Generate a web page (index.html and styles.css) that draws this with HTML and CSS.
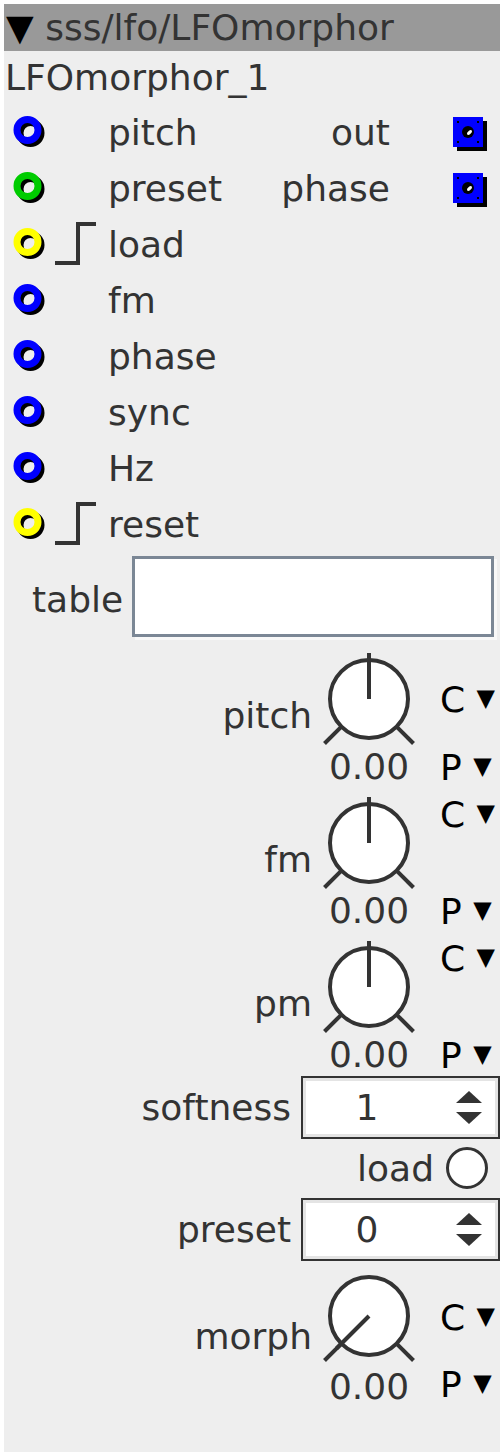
FILE: index.html
```html
<!DOCTYPE html>
<html>
    <head>
        <meta charset="utf-8">
        <title>LFOmorphor</title>
        <link rel="stylesheet" href="styles.css">
    </head>
    <body>
        <svg class="defs">
            <defs>
                <symbol id="jack" viewBox="0 0 36 36">
                    <circle cx="18.5" cy="19" r="10.5" fill="none" stroke="#000" stroke-width="7"/>
                    <circle cx="15.5" cy="16" r="10.5" fill="none" stroke="currentColor" stroke-width="7"/>
                </symbol>
                <symbol id="trig" viewBox="0 0 46 44">
                    <polyline points="3,41 26,41 26,2 44,2" fill="none" stroke="#333" stroke-width="4"/>
                </symbol>
                <symbol id="outlet" viewBox="0 0 38 38">
                    <rect x="6" y="8" width="30" height="30" fill="#000"/>
                    <rect x="2" y="4" width="30" height="30" fill="#00f"/>
                    <rect x="6" y="8" width="2" height="2" fill="#000"/>
                    <rect x="26" y="8" width="2" height="2" fill="#000"/>
                    <rect x="6" y="28" width="2" height="2" fill="#000"/>
                    <rect x="26" y="28" width="2" height="2" fill="#000"/>
                    <circle cx="17" cy="19" r="6" fill="#000"/>
                    <ellipse cx="18.5" cy="19.5" rx="3" ry="1.6" fill="#fff" transform="rotate(-40 18.5 19.5)"/>
                </symbol>
                <symbol id="knob" viewBox="0 0 100 100">
                    <circle cx="50" cy="50" r="39" fill="#fff" stroke="#333" stroke-width="4"/>
                    <line x1="21.7" y1="78.3" x2="5.5" y2="94.5" stroke="#333" stroke-width="4"/>
                    <line x1="78.3" y1="78.3" x2="94.5" y2="94.5" stroke="#333" stroke-width="4"/>
                </symbol>
            </defs>
        </svg>

        <div class="panel">
            <div class="header"><span class="tri">▼</span> sss/lfo/LFOmorphor</div>
            <div class="name">LFOmorphor_1</div>

            <div class="port">
                <svg class="jack blue"><use href="#jack"/></svg>
                <span class="trig"></span>
                <span class="plabel">pitch</span>
                <span class="olabel">out</span>
                <svg class="outlet"><use href="#outlet"/></svg>
            </div>
            <div class="port">
                <svg class="jack green"><use href="#jack"/></svg>
                <span class="trig"></span>
                <span class="plabel">preset</span>
                <span class="olabel">phase</span>
                <svg class="outlet"><use href="#outlet"/></svg>
            </div>
            <div class="port">
                <svg class="jack yellow"><use href="#jack"/></svg>
                <svg class="trig"><use href="#trig"/></svg>
                <span class="plabel">load</span>
            </div>
            <div class="port">
                <svg class="jack blue"><use href="#jack"/></svg>
                <span class="trig"></span>
                <span class="plabel">fm</span>
            </div>
            <div class="port">
                <svg class="jack blue"><use href="#jack"/></svg>
                <span class="trig"></span>
                <span class="plabel">phase</span>
            </div>
            <div class="port">
                <svg class="jack blue"><use href="#jack"/></svg>
                <span class="trig"></span>
                <span class="plabel">sync</span>
            </div>
            <div class="port">
                <svg class="jack blue"><use href="#jack"/></svg>
                <span class="trig"></span>
                <span class="plabel">Hz</span>
            </div>
            <div class="port">
                <svg class="jack yellow"><use href="#jack"/></svg>
                <svg class="trig"><use href="#trig"/></svg>
                <span class="plabel">reset</span>
            </div>

            <div class="tablerow">
                <span class="tlabel">table</span>
                <div class="tablebox"></div>
            </div>

            <div class="knobrow">
                <span class="klabel">pitch</span>
                <div class="dial">
                    <svg class="knob" viewBox="0 0 100 100">
                        <use href="#knob"/>
                        <line x1="50" y1="50" x2="50" y2="4" stroke="#333" stroke-width="4"/>
                    </svg>
                    <span class="value">0.00</span>
                </div>
                <div class="cp">
                    <span class="c">C <i>▼</i></span>
                    <span class="p">P <i>▼</i></span>
                </div>
            </div>
            <div class="knobrow high">
                <span class="klabel">fm</span>
                <div class="dial">
                    <svg class="knob" viewBox="0 0 100 100">
                        <use href="#knob"/>
                        <line x1="50" y1="50" x2="50" y2="4" stroke="#333" stroke-width="4"/>
                    </svg>
                    <span class="value">0.00</span>
                </div>
                <div class="cp">
                    <span class="c">C <i>▼</i></span>
                    <span class="p">P <i>▼</i></span>
                </div>
            </div>
            <div class="knobrow high">
                <span class="klabel">pm</span>
                <div class="dial">
                    <svg class="knob" viewBox="0 0 100 100">
                        <use href="#knob"/>
                        <line x1="50" y1="50" x2="50" y2="4" stroke="#333" stroke-width="4"/>
                    </svg>
                    <span class="value">0.00</span>
                </div>
                <div class="cp">
                    <span class="c">C <i>▼</i></span>
                    <span class="p">P <i>▼</i></span>
                </div>
            </div>

            <div class="spinrow">
                <span class="slabel">softness</span>
                <div class="spin">
                    <span class="sval">1</span>
                    <span class="arrows"><span class="up"></span><span class="down"></span></span>
                </div>
            </div>
            <div class="loadrow">
                <span>load</span>
                <span class="bang"></span>
            </div>
            <div class="spinrow">
                <span class="slabel">preset</span>
                <div class="spin">
                    <span class="sval">0</span>
                    <span class="arrows"><span class="up"></span><span class="down"></span></span>
                </div>
            </div>

            <div class="knobrow morph">
                <span class="klabel">morph</span>
                <div class="dial">
                    <svg class="knob" viewBox="0 0 100 100">
                        <use href="#knob"/>
                        <line x1="50" y1="50" x2="17.5" y2="82.5" stroke="#333" stroke-width="4"/>
                    </svg>
                    <span class="value">0.00</span>
                </div>
                <div class="cp">
                    <span class="c">C <i>▼</i></span>
                    <span class="p">P <i>▼</i></span>
                </div>
            </div>
        </div>
    </body>
</html>
```

FILE: styles.css
```css
body,html{
    margin:0px;
    padding:0px;
    background:white;
}
.defs{
    position:absolute;
    width:0px;
    height:0px;
}
.panel{
    margin:4px;
    width:496px;
    height:1448px;
    background:#eeeeee;
    font-family:"DejaVu Sans",sans-serif;
    font-size:36px;
    color:#333;
    overflow:hidden;
}
.header{
    height:47px;
    line-height:47px;
    background:#999999;
    padding-left:2px;
    white-space:nowrap;
}
.header .tri{
    color:black;
}
.name{
    height:53px;
    line-height:53px;
    padding-left:1px;
}

/* inlets and outlets */
.port{
    display:flex;
    align-items:center;
    height:56px;
}
.jack{
    width:36px;
    height:36px;
    margin-left:8px;
}
.blue{color:#0000ff;}
.green{color:#00cc00;}
.yellow{color:#ffff00;}
.trig{
    display:block;
    width:46px;
    height:44px;
    margin-left:4px;
}
.plabel{
    margin-left:10px;
    flex:1;
}
.olabel{
    margin-right:61px;
}
.outlet{
    width:38px;
    height:38px;
    margin-right:11px;
}

/* table */
.tablerow{
    display:flex;
    align-items:center;
    height:88px;
}
.tlabel{
    margin-left:28px;
    width:100px;
    margin-top:6px;
}
.tablebox{
    width:356px;
    height:75px;
    background:white;
    border:3px solid #7b8795;
    box-shadow:3px 3px 0px #f8f8f8;
}

/* knobs */
.knobrow{
    display:flex;
    height:144px;
}
.klabel{
    flex:1;
    text-align:right;
    padding-right:7px;
    margin-top:58px;
    line-height:36px;
    height:36px;
}
.dial{
    width:100px;
    display:flex;
    flex-direction:column;
    align-items:center;
    padding-top:9px;
}
.knob{
    width:100px;
    height:100px;
    overflow:visible;
}
.value{
    line-height:36px;
}
.cp{
    width:60px;
    margin-left:21px;
    display:flex;
    flex-direction:column;
    color:black;
    line-height:36px;
    white-space:nowrap;
}
.cp i{
    font-style:normal;
    font-size:24px;
    vertical-align:top;
    position:relative;
    top:-2px;
}
.cp .c{
    margin-top:42px;
}
.cp .p{
    margin-top:32px;
}
.high .cp .c{
    margin-top:13px;
}
.high .cp .p{
    margin-top:61px;
}
.morph{
    height:140px;
}
.morph .dial{
    padding-top:2px;
}
.morph .value{
    margin-top:3px;
}
.morph .klabel{
    margin-top:55px;
}
.morph .cp .c{
    margin-top:36px;
}
.morph .cp .p{
    margin-top:31px;
}

/* number boxes */
.spinrow{
    display:flex;
    align-items:center;
    height:70px;
}
.slabel{
    flex:1;
    text-align:right;
    padding-right:10px;
}
.spin{
    width:195px;
    height:59px;
    border:2px solid #333;
    background:white;
    box-shadow:inset 0px 0px 0px 3px #e4e4e4;
    display:flex;
    align-items:center;
}
.sval{
    width:128px;
    text-align:center;
    color:#333;
}
.arrows{
    display:flex;
    flex-direction:column;
    align-items:center;
    gap:9px;
    margin-left:25px;
}
.up{
    width:0px;
    height:0px;
    border-left:13px solid transparent;
    border-right:13px solid transparent;
    border-bottom:12px solid #333;
}
.down{
    width:0px;
    height:0px;
    border-left:13px solid transparent;
    border-right:13px solid transparent;
    border-top:12px solid #333;
}
.loadrow{
    display:flex;
    align-items:center;
    justify-content:flex-end;
    height:52px;
    padding-right:12px;
}
.bang{
    width:36px;
    height:36px;
    border:3px solid #333;
    border-radius:50%;
    background:white;
    margin-left:12px;
}
```
